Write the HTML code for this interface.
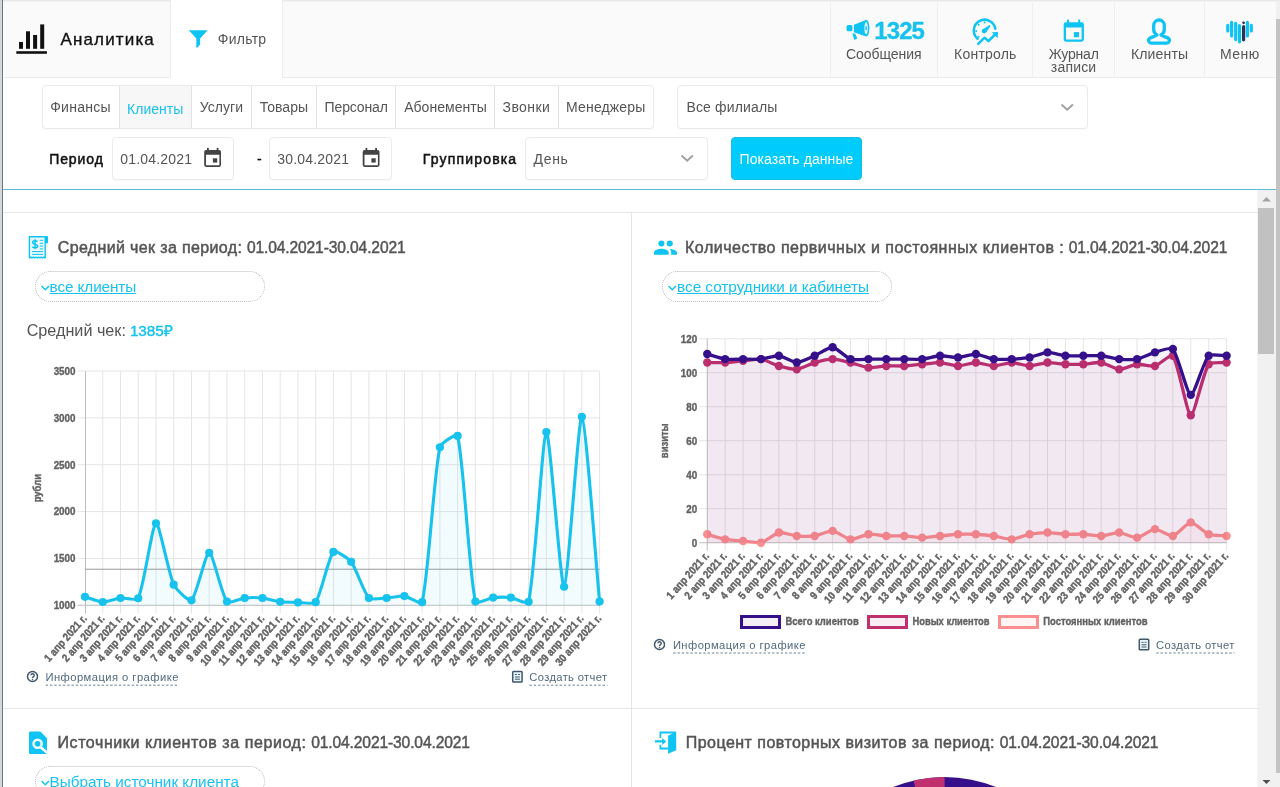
<!DOCTYPE html>
<html lang="ru">
<head>
<meta charset="utf-8">
<title>Аналитика</title>
<style>
*{box-sizing:border-box;margin:0;padding:0}
html,body{width:1280px;height:787px;overflow:hidden;background:#fff}
body{position:relative;font-family:"Liberation Sans",sans-serif;color:#555;font-size:15px}
#app{position:absolute;left:0;top:0;width:1280px;height:787px;overflow:hidden;background:#fff;will-change:transform}
.abs,.abs>*{position:absolute}
.t{position:absolute;white-space:nowrap;line-height:20px;height:20px}
/* window chrome */
#edge-l{left:0;top:0;width:3px;height:787px;background:linear-gradient(90deg,#d3d8db 0,#d3d8db 1.6px,#70757a 1.6px,#70757a 3px)}
#edge-r{left:1276px;top:19px;width:4px;height:754px;background:#c3c3c3}
#edge-r2{left:1276px;top:0;width:4px;height:787px;background:#f1f1f1}
#edge-t{left:3px;top:0;width:1277px;height:2px;background:linear-gradient(#e4e4e4,#f6f6f6)}
/* header */
#hdr{left:4px;top:0;width:1272px;height:78px;background:#fafafa;border-bottom:1px solid #ececec}
#tab-f{left:170px;top:0;width:113px;height:78px;background:#fff;border-left:1px solid #ececec;border-right:1px solid #ececec}
.hsep{top:0;width:1px;height:77px;background:#efefef}
/* filter */
.box{border:1px solid #ebebeb;border-radius:4px;background:#fff;box-shadow:0 1px 1px rgba(0,0,0,.03)}
#btn{left:731px;top:137px;width:131px;height:43px;border-radius:4px;background:#00cbfd;border:1px solid #16bde8;color:#fff;font-size:15px;line-height:43px;text-align:center;white-space:nowrap}
.vs{top:86px;width:1px;height:42px;background:#e3e3e3}
#cy{left:3px;top:189px;width:1273px;height:1px;background:#5fbdd3}
/* content */
.hr{height:1px;background:#e6e6e6;left:3px;width:1255px}
#vr{left:631px;top:213px;width:1px;height:574px;background:#e6e6e6}
h2{font-weight:normal;color:#555;font-size:16px}
.pill{height:31px;width:230px;border:1px dotted #bcbcbc;border-radius:16px;background:#fff}
.lnk{color:#18c2ef;text-decoration:underline;font-size:15px}
.il{font-size:12px;color:#50697b}
.il u{text-decoration:none}
#sb{left:1257px;top:190px;width:19px;height:597px;background:linear-gradient(90deg,#f8f8f8 0,#f1f1f1 1px)}
#sbt{left:1258px;top:208px;width:16px;height:146px;background:#c1c1c1}
svg{position:absolute;left:0;top:0;overflow:visible}
.tk text,text.tk{font-family:"Liberation Sans",sans-serif;font-weight:bold;font-size:11px;fill:#636363;stroke:#636363;stroke-width:.4px}
</style>
</head>
<body>
<div id="app">
<div class="abs" id="chrome">
  <div id="edge-r2"></div>
  <div id="edge-r"></div>
  <div id="hdr"></div>
  <div id="edge-t"></div>
  <div id="edge-l"></div>
</div>


<div class="abs" id="header">
  <div id="tab-f"></div>
  <div class="hsep" style="left:830px"></div>
  <div class="hsep" style="left:937px"></div>
  <div class="hsep" style="left:1032px"></div>
  <div class="hsep" style="left:1114px"></div>
  <div class="hsep" style="left:1204px"></div>
  <svg width="1280" height="78" viewBox="0 0 1280 78">
    <!-- analytics -->
    <g fill="#111">
      <rect x="16.3" y="51.2" width="30.6" height="2.6"/>
      <rect x="19" y="42" width="4" height="6.8"/>
      <rect x="26" y="31.3" width="4" height="17.5"/>
      <rect x="33.1" y="35" width="4" height="13.8"/>
      <rect x="40.2" y="24.4" width="4" height="24.4"/>
    </g>
    <!-- funnel -->

    <path d="M188.8 30.2 H207.6 L200.1 38.6 V44.6 L197.8 47.6 H196.3 V38.6 Z" fill="#0fc4f3"/>
    <g id="ic-mega" fill="#0fc4f3">
      <rect x="846.6" y="25" width="5.8" height="6.3" rx="1.6"/>
      <path d="M853.9 24.7 L864.6 20.5 V35.9 L853.9 32.3 Z"/>
      <ellipse cx="866.1" cy="28.2" rx="3.3" ry="8.4"/>
      <ellipse cx="866.1" cy="28.2" rx="1.7" ry="6.1" fill="#eafaff"/>
      <ellipse cx="866.1" cy="28.2" rx=".8" ry="2.3"/>
      <path d="M852.4 33.2 L855.3 33.8 L857.3 38.5 L854.2 39.9 Z"/>
    </g>
    <g id="ic-gauge">
      <g stroke="#0fc4f3" fill="none" stroke-width="2.5" stroke-linecap="round" stroke-linejoin="round">
        <path d="M977.56 38.69 A10.8 10.8 0 1 1 995.27 28.81"/>
        <path d="M978.2 43.8 L984.6 37.7 L988.4 41.2 L994.6 35"/>
      </g>
      <g fill="#0fc4f3">
        <path d="M991.8 32.3 L998 32 L997.7 38.2 Z"/>
        <circle cx="984.1" cy="31.1" r="2.4"/>
        <path d="M982.6 29.4 L989.7 25 L990.6 25.9 L985.9 32.8 Z"/>
        <circle cx="984.6" cy="22.4" r="1"/><circle cx="978.7" cy="24.8" r="1"/><circle cx="976.2" cy="31" r="1"/><circle cx="978.6" cy="36.8" r="1"/>
      </g>
    </g>
    <g id="ic-cal" fill="#0fc4f3">
      <path fill-rule="evenodd" d="M1065.8 22.2 h16 a2.1 2.1 0 0 1 2.1 2.1 v15.3 a2.1 2.1 0 0 1 -2.1 2.1 h-16 a2.1 2.1 0 0 1 -2.1 -2.1 v-15.3 a2.1 2.1 0 0 1 2.1 -2.1 z M1066 27.5 v12.1 h15.6 v-12.1 z"/>
      <rect x="1067" y="19.6" width="2" height="3.4" rx=".6"/><rect x="1078.2" y="19.6" width="2" height="3.4" rx=".6"/>
      <rect x="1073.9" y="32.1" width="5.1" height="5.1"/>
    </g>
    <path id="ic-user" fill="none" stroke="#0fc4f3" stroke-width="3.3" stroke-linejoin="round" d="M1157 35 C1154.6 33.6 1153.7 31.6 1153.7 29.5 V25.3 a5.3 5.3 0 0 1 10.6 0 V29.5 C1164.3 31.6 1163.4 33.6 1161 35 C1163 36.6 1166.5 37 1168.4 38.3 C1169.6 39.2 1169.4 41 1168.8 42 C1168.3 42.9 1167.3 43.1 1166.5 43.1 H1151.5 C1150.7 43.1 1149.7 42.9 1149.2 42 C1148.6 41 1148.4 39.2 1149.6 38.3 C1151.5 37 1155 36.6 1157 35 Z"/>
    <g id="ic-heart" stroke="#0fc4f3" stroke-width="3.2" stroke-linecap="round" fill="none">
      <path d="M1227.8 25.3 V30.9 M1231.6 22.3 V36 M1235.7 23.3 V39.6 M1239.5 25.6 V41.8 M1247.4 22.3 V36 M1251.3 25.3 V30.9"/>
      <path d="M1243.6 26.6 V39.8" stroke="#2a3356"/>
      <circle cx="1243.6" cy="22.8" r="1.4" fill="#2a3356" stroke="none"/>
    </g>

  </svg>
  <span class="t" style="left:60.45px;top:30.40px;font-size:17px;letter-spacing:1.154px;-webkit-text-stroke:.35px;color:#111;">Аналитика</span>
  <span class="t" style="left:217.76px;top:28.80px;font-size:14px;letter-spacing:0.264px;">Фильтр</span>
  <span class="t" style="left:874.22px;top:21.00px;font-size:24px;letter-spacing:-0.880px;font-weight:bold;-webkit-text-stroke:.3px;color:#18c2ef;">1325</span>
  <span class="t" style="left:846.01px;top:43.80px;font-size:14px;letter-spacing:-0.059px;">Сообщения</span>
  <span class="t" style="left:954.10px;top:43.80px;font-size:14px;letter-spacing:0.209px;">Контроль</span>
  <span class="t" style="left:1048.80px;top:43.90px;font-size:14px;letter-spacing:-0.202px;">Журнал</span>
  <span class="t" style="left:1050.82px;top:57.10px;font-size:14px;letter-spacing:0.188px;">записи</span>
  <span class="t" style="left:1130.90px;top:43.90px;font-size:14px;letter-spacing:0.171px;">Клиенты</span>
  <span class="t" style="left:1220.10px;top:43.90px;font-size:14px;letter-spacing:0.439px;">Меню</span>
</div>



<div class="abs" id="filter">
  <div class="box" style="left:42px;top:85px;width:612px;height:44px"></div>
  <div style="left:119px;top:86px;width:73px;height:42px;background:#f7f7f7;border-left:1px solid #e3e3e3;border-right:1px solid #e3e3e3"></div>
  <div class="vs" style="left:251px"></div><div class="vs" style="left:316px"></div><div class="vs" style="left:395px"></div><div class="vs" style="left:494px"></div><div class="vs" style="left:558px"></div>
  <span class="t" style="left:50.16px;top:97.00px;font-size:14px;letter-spacing:0.285px;">Финансы</span>
  <span class="t" style="left:127.10px;top:98.60px;font-size:14px;letter-spacing:-0.006px;color:#18c2ef;">Клиенты</span>
  <span class="t" style="left:199.77px;top:97.00px;font-size:14px;letter-spacing:0.027px;">Услуги</span>
  <span class="t" style="left:259.77px;top:97.00px;font-size:14px;letter-spacing:0.019px;">Товары</span>
  <span class="t" style="left:324.60px;top:97.00px;font-size:14px;letter-spacing:-0.140px;">Персонал</span>
  <span class="t" style="left:404.16px;top:97.00px;font-size:14px;letter-spacing:0.036px;">Абонементы</span>
  <span class="t" style="left:502.53px;top:97.00px;font-size:14px;letter-spacing:0.420px;">Звонки</span>
  <span class="t" style="left:566.10px;top:97.00px;font-size:14px;letter-spacing:0.153px;">Менеджеры</span>
  <div class="box" style="left:677px;top:85px;width:411px;height:44px"></div>
  <span class="t" style="left:686.40px;top:97.00px;font-size:14px;letter-spacing:0.151px;">Все филиалы</span>
  <span class="t" style="left:49.22px;top:148.80px;font-size:14px;letter-spacing:0.901px;-webkit-text-stroke:.5px;color:#111;">Период</span>
  <div class="box" style="left:112px;top:137px;width:122px;height:43px"></div>
  <span class="t" style="left:120.34px;top:148.80px;font-size:14px;letter-spacing:0.175px;">01.04.2021</span>
  <span class="t" style="left:256.95px;top:148.60px;font-size:14px;letter-spacing:0.000px;-webkit-text-stroke:.3px;color:#111;">-</span>
  <div class="box" style="left:269px;top:137px;width:123px;height:43px"></div>
  <span class="t" style="left:277.25px;top:148.80px;font-size:14px;letter-spacing:0.177px;">30.04.2021</span>
  <span class="t" style="left:422.70px;top:148.80px;font-size:14px;letter-spacing:1.183px;-webkit-text-stroke:.5px;color:#111;">Группировка</span>
  <div class="box" style="left:525px;top:137px;width:183px;height:43px"></div>
  <span class="t" style="left:533.60px;top:148.80px;font-size:14px;letter-spacing:0.632px;">День</span>
  <div id="btn"></div>
  <span class="t" style="left:739.60px;top:148.80px;font-size:14px;letter-spacing:0.075px;color:#fff;">Показать данные</span>
  <svg width="1280" height="190" viewBox="0 0 1280 190">
    <g fill="none" stroke="#a0a0a0" stroke-width="1.9">
      <path d="M1061.5 104.5 l5.7 5.2 l5.7 -5.2"/>
      <path d="M681.5 155.5 l5.7 5.2 l5.7 -5.2"/>
    </g>
    <g id="cal1" fill="#444">
      <path fill-rule="evenodd" d="M206 149.9 h13.2 a1.8 1.8 0 0 1 1.8 1.8 v13.4 a1.8 1.8 0 0 1 -1.8 1.8 h-13.2 a1.8 1.8 0 0 1 -1.8 -1.8 v-13.4 a1.8 1.8 0 0 1 1.8 -1.8 z M206 154.7 v10.5 h13.4 v-10.5 z"/>
      <rect x="207" y="147.9" width="1.8" height="2.6"/><rect x="216.7" y="147.9" width="1.8" height="2.6"/>
      <rect x="212.9" y="158.3" width="4.3" height="4.3"/>
    </g>
    <use href="#cal1" x="158.5"/>
  </svg>
  <div id="cy"></div>
</div>



<div class="abs" id="content">
  <div id="sb"></div><div id="sbt"></div>
  <div class="hr" style="top:212px"></div>
  <div class="hr" style="top:708px"></div>
  <div id="vr"></div>

  <!-- panel 1 -->
  <h2 class="abs"><span class="t" style="left:57.72px;top:238.10px;font-size:16px;letter-spacing:0.359px;-webkit-text-stroke:.5px;">Средний чек за период:</span> <span class="t" style="left:246.89px;top:238.10px;font-size:15.6px;letter-spacing:-0.125px;-webkit-text-stroke:.45px;">01.04.2021-30.04.2021</span></h2>
  <div class="pill" style="left:35px;top:271px"></div>
  <a class="t lnk" style="left:49.60px;top:277.00px;font-size:15.3px;letter-spacing:-0.098px;">все клиенты</a>
  <span class="t" style="left:26.64px;top:320.40px;font-size:16.2px;letter-spacing:0.000px;">Средний чек:</span>
  <span class="t" style="left:129.93px;top:321.40px;font-size:15.3px;letter-spacing:-0.085px;-webkit-text-stroke:.4px;color:#18c2ef;">1385₽</span>
  <span class="t il" style="left:45.39px;top:667.30px;font-size:11.2px;letter-spacing:0.466px;"><u>Информация о графике</u></span>
  <span class="t il" style="left:529.35px;top:667.30px;font-size:11.2px;letter-spacing:0.348px;"><u>Создать отчет</u></span>

  <!-- panel 2 -->
  <h2 class="abs"><span class="t" style="left:685.03px;top:238.10px;font-size:16px;letter-spacing:0.500px;-webkit-text-stroke:.5px;">Количество первичных и постоянных клиентов :</span> <span class="t" style="left:1068.79px;top:238.10px;font-size:15.6px;letter-spacing:-0.136px;-webkit-text-stroke:.45px;">01.04.2021-30.04.2021</span></h2>
  <div class="pill" style="left:662px;top:271px"></div>
  <a class="t lnk" style="left:677.10px;top:277.00px;font-size:15.3px;letter-spacing:-0.020px;">все сотрудники и кабинеты</a>
  <span class="t il" style="left:672.89px;top:634.80px;font-size:11.2px;letter-spacing:0.445px;"><u>Информация о графике</u></span>
  <span class="t il" style="left:1156.05px;top:634.80px;font-size:11.2px;letter-spacing:0.405px;"><u>Создать отчет</u></span>

  <!-- panel 3 -->
  <h2 class="abs"><span class="t" style="left:57.48px;top:733.10px;font-size:16px;letter-spacing:0.579px;-webkit-text-stroke:.5px;">Источники клиентов за период:</span> <span class="t" style="left:311.19px;top:733.10px;font-size:15.6px;letter-spacing:-0.125px;-webkit-text-stroke:.45px;">01.04.2021-30.04.2021</span></h2>
  <div class="pill" style="left:35px;top:766px"></div>
  <a class="t lnk" style="left:49.54px;top:772.00px;font-size:15.3px;letter-spacing:-0.010px;">Выбрать источник клиента</a>

  <!-- panel 4 -->
  <h2 class="abs"><span class="t" style="left:685.75px;top:733.10px;font-size:16px;letter-spacing:0.467px;-webkit-text-stroke:.5px;">Процент повторных визитов за период:</span> <span class="t" style="left:999.69px;top:733.10px;font-size:15.6px;letter-spacing:-0.125px;-webkit-text-stroke:.45px;">01.04.2021-30.04.2021</span></h2>

  <svg width="1280" height="787" viewBox="0 0 1280 787">
    <g id="chart1">
<path d="M102.74,371.00 V613.30 M120.49,371.00 V613.30 M138.23,371.00 V613.30 M155.98,371.00 V613.30 M173.72,371.00 V613.30 M191.47,371.00 V613.30 M209.21,371.00 V613.30 M226.96,371.00 V613.30 M244.70,371.00 V613.30 M262.45,371.00 V613.30 M280.19,371.00 V613.30 M297.94,371.00 V613.30 M315.68,371.00 V613.30 M333.43,371.00 V613.30 M351.17,371.00 V613.30 M368.92,371.00 V613.30 M386.66,371.00 V613.30 M404.41,371.00 V613.30 M422.15,371.00 V613.30 M439.90,371.00 V613.30 M457.64,371.00 V613.30 M475.39,371.00 V613.30 M493.13,371.00 V613.30 M510.88,371.00 V613.30 M528.62,371.00 V613.30 M546.37,371.00 V613.30 M564.11,371.00 V613.30 M581.86,371.00 V613.30 M599.60,371.00 V613.30 M77.50,558.44 H599.60 M77.50,511.58 H599.60 M77.50,464.72 H599.60 M77.50,417.86 H599.60 M77.50,371.00 H599.60" stroke="#e5e5e5" stroke-width="1" fill="none"/>
<path d="M85.50,371.00 V613.30 M77.50,605.30 H599.60" stroke="#bdbdbd" stroke-width="1" fill="none"/>
<path d="M85.00,569.22 H599.60" stroke="#9a9a9a" stroke-width="1" fill="none"/>
<path d="M85.00,596.87C88.55,597.90 99.17,601.91 102.74,602.02C106.27,602.13 116.90,598.37 120.49,597.99C123.99,597.62 136.91,601.07 138.23,598.27C144.00,586.13 152.10,524.78 155.98,523.29C159.20,522.06 168.54,573.44 173.72,584.68C175.64,588.85 189.21,602.36 191.47,600.33C196.31,595.99 205.70,552.70 209.21,552.82C212.80,552.94 221.70,594.85 226.96,601.55C228.79,603.89 241.12,598.35 244.70,597.99C248.22,597.64 258.94,597.61 262.45,597.99C266.04,598.38 276.60,601.39 280.19,601.83C283.70,602.27 294.39,602.36 297.94,602.39C301.49,602.43 313.91,604.73 315.68,602.21C321.01,594.63 328.29,557.73 333.43,551.88C335.39,549.65 348.79,558.72 351.17,561.81C355.89,567.94 363.99,592.97 368.92,597.99C371.09,600.20 383.12,598.18 386.66,597.99C390.22,597.80 400.95,595.70 404.41,596.12C408.04,596.55 421.39,605.30 422.15,602.21C428.49,575.64 433.64,476.58 439.90,447.29C440.74,443.33 456.84,432.48 457.64,435.95C463.94,463.34 468.99,572.40 475.39,601.55C476.08,604.73 489.54,598.01 493.13,597.61C496.64,597.23 507.38,597.20 510.88,597.61C514.47,598.04 527.94,605.03 528.62,601.83C535.03,571.91 542.65,433.59 546.37,432.01C549.75,430.57 560.73,588.20 564.11,586.74C567.82,585.14 578.45,415.32 581.86,416.74C585.55,418.28 596.05,564.59 599.60,601.55 L599.60,605.30 L85.00,605.30 Z" fill="rgba(28,196,236,0.06)" stroke="none"/>
<path d="M85.00,596.87C88.55,597.90 99.17,601.91 102.74,602.02C106.27,602.13 116.90,598.37 120.49,597.99C123.99,597.62 136.91,601.07 138.23,598.27C144.00,586.13 152.10,524.78 155.98,523.29C159.20,522.06 168.54,573.44 173.72,584.68C175.64,588.85 189.21,602.36 191.47,600.33C196.31,595.99 205.70,552.70 209.21,552.82C212.80,552.94 221.70,594.85 226.96,601.55C228.79,603.89 241.12,598.35 244.70,597.99C248.22,597.64 258.94,597.61 262.45,597.99C266.04,598.38 276.60,601.39 280.19,601.83C283.70,602.27 294.39,602.36 297.94,602.39C301.49,602.43 313.91,604.73 315.68,602.21C321.01,594.63 328.29,557.73 333.43,551.88C335.39,549.65 348.79,558.72 351.17,561.81C355.89,567.94 363.99,592.97 368.92,597.99C371.09,600.20 383.12,598.18 386.66,597.99C390.22,597.80 400.95,595.70 404.41,596.12C408.04,596.55 421.39,605.30 422.15,602.21C428.49,575.64 433.64,476.58 439.90,447.29C440.74,443.33 456.84,432.48 457.64,435.95C463.94,463.34 468.99,572.40 475.39,601.55C476.08,604.73 489.54,598.01 493.13,597.61C496.64,597.23 507.38,597.20 510.88,597.61C514.47,598.04 527.94,605.03 528.62,601.83C535.03,571.91 542.65,433.59 546.37,432.01C549.75,430.57 560.73,588.20 564.11,586.74C567.82,585.14 578.45,415.32 581.86,416.74C585.55,418.28 596.05,564.59 599.60,601.55" fill="none" stroke="#17c2ec" stroke-width="3.1" stroke-linejoin="round" stroke-linecap="butt"/>
<g fill="#17c2ec"><circle cx="85.00" cy="596.87" r="4.1"/><circle cx="102.74" cy="602.02" r="4.1"/><circle cx="120.49" cy="597.99" r="4.1"/><circle cx="138.23" cy="598.27" r="4.1"/><circle cx="155.98" cy="523.29" r="4.1"/><circle cx="173.72" cy="584.68" r="4.1"/><circle cx="191.47" cy="600.33" r="4.1"/><circle cx="209.21" cy="552.82" r="4.1"/><circle cx="226.96" cy="601.55" r="4.1"/><circle cx="244.70" cy="597.99" r="4.1"/><circle cx="262.45" cy="597.99" r="4.1"/><circle cx="280.19" cy="601.83" r="4.1"/><circle cx="297.94" cy="602.39" r="4.1"/><circle cx="315.68" cy="602.21" r="4.1"/><circle cx="333.43" cy="551.88" r="4.1"/><circle cx="351.17" cy="561.81" r="4.1"/><circle cx="368.92" cy="597.99" r="4.1"/><circle cx="386.66" cy="597.99" r="4.1"/><circle cx="404.41" cy="596.12" r="4.1"/><circle cx="422.15" cy="602.21" r="4.1"/><circle cx="439.90" cy="447.29" r="4.1"/><circle cx="457.64" cy="435.95" r="4.1"/><circle cx="475.39" cy="601.55" r="4.1"/><circle cx="493.13" cy="597.61" r="4.1"/><circle cx="510.88" cy="597.61" r="4.1"/><circle cx="528.62" cy="601.83" r="4.1"/><circle cx="546.37" cy="432.01" r="4.1"/><circle cx="564.11" cy="586.74" r="4.1"/><circle cx="581.86" cy="416.74" r="4.1"/><circle cx="599.60" cy="601.55" r="4.1"/></g>
<g class="tk" text-anchor="end">
<text transform="translate(75.50,609.20) scale(0.895,1)">1000</text>
<text transform="translate(75.50,562.34) scale(0.895,1)">1500</text>
<text transform="translate(75.50,515.48) scale(0.895,1)">2000</text>
<text transform="translate(75.50,468.62) scale(0.895,1)">2500</text>
<text transform="translate(75.50,421.76) scale(0.895,1)">3000</text>
<text transform="translate(75.50,374.90) scale(0.895,1)">3500</text>
</g>
<text class="tk" text-anchor="middle" transform="translate(41.30,488.15) rotate(-90) scale(0.86,1)">рубли</text>
<g class="tk" text-anchor="end">
<text transform="translate(87.50,618.80) rotate(-48.7) scale(0.885,1)">1 апр 2021 г.</text>
<text transform="translate(105.24,618.80) rotate(-48.7) scale(0.885,1)">2 апр 2021 г.</text>
<text transform="translate(122.99,618.80) rotate(-48.7) scale(0.885,1)">3 апр 2021 г.</text>
<text transform="translate(140.73,618.80) rotate(-48.7) scale(0.885,1)">4 апр 2021 г.</text>
<text transform="translate(158.48,618.80) rotate(-48.7) scale(0.885,1)">5 апр 2021 г.</text>
<text transform="translate(176.22,618.80) rotate(-48.7) scale(0.885,1)">6 апр 2021 г.</text>
<text transform="translate(193.97,618.80) rotate(-48.7) scale(0.885,1)">7 апр 2021 г.</text>
<text transform="translate(211.71,618.80) rotate(-48.7) scale(0.885,1)">8 апр 2021 г.</text>
<text transform="translate(229.46,618.80) rotate(-48.7) scale(0.885,1)">9 апр 2021 г.</text>
<text transform="translate(247.20,618.80) rotate(-48.7) scale(0.885,1)">10 апр 2021 г.</text>
<text transform="translate(264.95,618.80) rotate(-48.7) scale(0.885,1)">11 апр 2021 г.</text>
<text transform="translate(282.69,618.80) rotate(-48.7) scale(0.885,1)">12 апр 2021 г.</text>
<text transform="translate(300.44,618.80) rotate(-48.7) scale(0.885,1)">13 апр 2021 г.</text>
<text transform="translate(318.18,618.80) rotate(-48.7) scale(0.885,1)">14 апр 2021 г.</text>
<text transform="translate(335.93,618.80) rotate(-48.7) scale(0.885,1)">15 апр 2021 г.</text>
<text transform="translate(353.67,618.80) rotate(-48.7) scale(0.885,1)">16 апр 2021 г.</text>
<text transform="translate(371.42,618.80) rotate(-48.7) scale(0.885,1)">17 апр 2021 г.</text>
<text transform="translate(389.16,618.80) rotate(-48.7) scale(0.885,1)">18 апр 2021 г.</text>
<text transform="translate(406.91,618.80) rotate(-48.7) scale(0.885,1)">19 апр 2021 г.</text>
<text transform="translate(424.65,618.80) rotate(-48.7) scale(0.885,1)">20 апр 2021 г.</text>
<text transform="translate(442.40,618.80) rotate(-48.7) scale(0.885,1)">21 апр 2021 г.</text>
<text transform="translate(460.14,618.80) rotate(-48.7) scale(0.885,1)">22 апр 2021 г.</text>
<text transform="translate(477.89,618.80) rotate(-48.7) scale(0.885,1)">23 апр 2021 г.</text>
<text transform="translate(495.63,618.80) rotate(-48.7) scale(0.885,1)">24 апр 2021 г.</text>
<text transform="translate(513.38,618.80) rotate(-48.7) scale(0.885,1)">25 апр 2021 г.</text>
<text transform="translate(531.12,618.80) rotate(-48.7) scale(0.885,1)">26 апр 2021 г.</text>
<text transform="translate(548.87,618.80) rotate(-48.7) scale(0.885,1)">27 апр 2021 г.</text>
<text transform="translate(566.61,618.80) rotate(-48.7) scale(0.885,1)">28 апр 2021 г.</text>
<text transform="translate(584.36,618.80) rotate(-48.7) scale(0.885,1)">29 апр 2021 г.</text>
<text transform="translate(602.10,618.80) rotate(-48.7) scale(0.885,1)">30 апр 2021 г.</text>
</g>
    </g>
    <g id="chart2">
<path d="M725.16,338.75 V550.75 M743.07,338.75 V550.75 M760.98,338.75 V550.75 M778.88,338.75 V550.75 M796.79,338.75 V550.75 M814.70,338.75 V550.75 M832.61,338.75 V550.75 M850.52,338.75 V550.75 M868.43,338.75 V550.75 M886.34,338.75 V550.75 M904.24,338.75 V550.75 M922.15,338.75 V550.75 M940.06,338.75 V550.75 M957.97,338.75 V550.75 M975.88,338.75 V550.75 M993.79,338.75 V550.75 M1011.70,338.75 V550.75 M1029.61,338.75 V550.75 M1047.51,338.75 V550.75 M1065.42,338.75 V550.75 M1083.33,338.75 V550.75 M1101.24,338.75 V550.75 M1119.15,338.75 V550.75 M1137.06,338.75 V550.75 M1154.97,338.75 V550.75 M1172.87,338.75 V550.75 M1190.78,338.75 V550.75 M1208.69,338.75 V550.75 M1226.60,338.75 V550.75 M699.25,508.75 H1226.60 M699.25,474.75 H1226.60 M699.25,440.75 H1226.60 M699.25,406.75 H1226.60 M699.25,372.75 H1226.60 M699.25,338.75 H1226.60" stroke="#e5e5e5" stroke-width="1" fill="none"/>
<path d="M707.25,338.75 V550.75 M699.25,542.75 H1226.60" stroke="#bdbdbd" stroke-width="1" fill="none"/>
<path d="M707.25,534.25C710.83,535.27 721.52,538.66 725.16,539.35C728.68,540.02 739.49,540.71 743.07,541.05C746.65,541.39 757.64,542.75 760.98,542.75C764.80,541.84 775.08,533.27 778.88,532.55C782.25,531.91 793.18,535.61 796.79,535.95C800.34,536.29 811.19,536.45 814.70,535.95C818.35,535.43 829.14,530.52 832.61,530.85C836.30,531.20 846.83,539.00 850.52,539.35C853.99,539.68 864.78,534.60 868.43,534.25C871.95,533.92 882.75,535.78 886.34,535.95C889.91,536.12 900.67,535.78 904.24,535.95C907.83,536.12 918.57,537.65 922.15,537.65C925.74,537.65 936.48,536.29 940.06,535.95C943.64,535.61 954.38,534.42 957.97,534.25C961.54,534.08 972.31,534.08 975.88,534.25C979.47,534.42 990.23,535.44 993.79,535.95C997.39,536.46 1008.15,539.52 1011.70,539.35C1015.32,539.18 1025.96,534.94 1029.61,534.25C1033.13,533.58 1043.93,532.55 1047.51,532.55C1051.10,532.55 1061.83,534.08 1065.42,534.25C1069.00,534.42 1079.76,534.08 1083.33,534.25C1086.92,534.42 1097.68,536.12 1101.24,535.95C1104.85,535.78 1115.60,532.38 1119.15,532.55C1122.77,532.72 1133.59,537.98 1137.06,537.65C1140.75,537.30 1151.32,529.32 1154.97,529.15C1158.49,528.98 1169.58,536.58 1172.87,535.95C1176.74,535.22 1187.12,522.52 1190.78,522.35C1194.28,522.18 1204.79,532.77 1208.69,534.25C1211.95,535.49 1223.02,535.61 1226.60,535.95 L1226.60,542.75 L707.25,542.75 Z" fill="rgba(251,143,143,0.05)" stroke="none"/>
<path d="M707.25,534.25C710.83,535.27 721.52,538.66 725.16,539.35C728.68,540.02 739.49,540.71 743.07,541.05C746.65,541.39 757.64,542.75 760.98,542.75C764.80,541.84 775.08,533.27 778.88,532.55C782.25,531.91 793.18,535.61 796.79,535.95C800.34,536.29 811.19,536.45 814.70,535.95C818.35,535.43 829.14,530.52 832.61,530.85C836.30,531.20 846.83,539.00 850.52,539.35C853.99,539.68 864.78,534.60 868.43,534.25C871.95,533.92 882.75,535.78 886.34,535.95C889.91,536.12 900.67,535.78 904.24,535.95C907.83,536.12 918.57,537.65 922.15,537.65C925.74,537.65 936.48,536.29 940.06,535.95C943.64,535.61 954.38,534.42 957.97,534.25C961.54,534.08 972.31,534.08 975.88,534.25C979.47,534.42 990.23,535.44 993.79,535.95C997.39,536.46 1008.15,539.52 1011.70,539.35C1015.32,539.18 1025.96,534.94 1029.61,534.25C1033.13,533.58 1043.93,532.55 1047.51,532.55C1051.10,532.55 1061.83,534.08 1065.42,534.25C1069.00,534.42 1079.76,534.08 1083.33,534.25C1086.92,534.42 1097.68,536.12 1101.24,535.95C1104.85,535.78 1115.60,532.38 1119.15,532.55C1122.77,532.72 1133.59,537.98 1137.06,537.65C1140.75,537.30 1151.32,529.32 1154.97,529.15C1158.49,528.98 1169.58,536.58 1172.87,535.95C1176.74,535.22 1187.12,522.52 1190.78,522.35C1194.28,522.18 1204.79,532.77 1208.69,534.25C1211.95,535.49 1223.02,535.61 1226.60,535.95" fill="none" stroke="#fb8f8f" stroke-width="3.3" stroke-linejoin="round" stroke-linecap="butt"/>
<g fill="#fb8f8f"><circle cx="707.25" cy="534.25" r="4.2"/><circle cx="725.16" cy="539.35" r="4.2"/><circle cx="743.07" cy="541.05" r="4.2"/><circle cx="760.98" cy="542.75" r="4.2"/><circle cx="778.88" cy="532.55" r="4.2"/><circle cx="796.79" cy="535.95" r="4.2"/><circle cx="814.70" cy="535.95" r="4.2"/><circle cx="832.61" cy="530.85" r="4.2"/><circle cx="850.52" cy="539.35" r="4.2"/><circle cx="868.43" cy="534.25" r="4.2"/><circle cx="886.34" cy="535.95" r="4.2"/><circle cx="904.24" cy="535.95" r="4.2"/><circle cx="922.15" cy="537.65" r="4.2"/><circle cx="940.06" cy="535.95" r="4.2"/><circle cx="957.97" cy="534.25" r="4.2"/><circle cx="975.88" cy="534.25" r="4.2"/><circle cx="993.79" cy="535.95" r="4.2"/><circle cx="1011.70" cy="539.35" r="4.2"/><circle cx="1029.61" cy="534.25" r="4.2"/><circle cx="1047.51" cy="532.55" r="4.2"/><circle cx="1065.42" cy="534.25" r="4.2"/><circle cx="1083.33" cy="534.25" r="4.2"/><circle cx="1101.24" cy="535.95" r="4.2"/><circle cx="1119.15" cy="532.55" r="4.2"/><circle cx="1137.06" cy="537.65" r="4.2"/><circle cx="1154.97" cy="529.15" r="4.2"/><circle cx="1172.87" cy="535.95" r="4.2"/><circle cx="1190.78" cy="522.35" r="4.2"/><circle cx="1208.69" cy="534.25" r="4.2"/><circle cx="1226.60" cy="535.95" r="4.2"/></g>
<path d="M707.25,362.55C710.83,362.55 721.58,362.72 725.16,362.55C728.75,362.38 739.49,361.19 743.07,360.85C746.65,360.51 757.51,358.66 760.98,359.15C764.67,359.68 775.21,364.90 778.88,365.95C782.38,366.94 793.30,369.68 796.79,369.35C800.46,369.00 811.03,363.60 814.70,362.55C818.19,361.56 829.03,359.15 832.61,359.15C836.19,359.15 846.98,361.71 850.52,362.55C854.14,363.41 864.78,367.30 868.43,367.65C871.95,367.98 882.75,366.12 886.34,365.95C889.91,365.78 900.67,366.12 904.24,365.95C907.83,365.78 918.57,364.59 922.15,364.25C925.74,363.91 936.50,362.38 940.06,362.55C943.67,362.72 954.39,365.95 957.97,365.95C961.55,365.95 972.30,362.55 975.88,362.55C979.46,362.55 990.21,365.95 993.79,365.95C997.37,365.95 1008.11,362.55 1011.70,362.55C1015.28,362.55 1026.02,365.95 1029.61,365.95C1033.19,365.95 1043.91,362.72 1047.51,362.55C1051.07,362.38 1061.83,364.08 1065.42,364.25C1069.00,364.42 1079.76,364.42 1083.33,364.25C1086.92,364.08 1097.77,362.06 1101.24,362.55C1104.93,363.08 1115.52,369.18 1119.15,369.35C1122.68,369.52 1133.41,364.60 1137.06,364.25C1140.58,363.92 1151.63,366.74 1154.97,365.95C1158.79,365.04 1171.09,353.29 1172.87,355.75C1178.25,363.15 1186.95,414.34 1190.78,415.25C1194.12,416.04 1203.32,372.16 1208.69,364.25C1210.48,361.62 1223.02,362.89 1226.60,362.55 L1226.60,542.75 L707.25,542.75 Z" fill="rgba(192,48,110,0.05)" stroke="none"/>
<path d="M707.25,362.55C710.83,362.55 721.58,362.72 725.16,362.55C728.75,362.38 739.49,361.19 743.07,360.85C746.65,360.51 757.51,358.66 760.98,359.15C764.67,359.68 775.21,364.90 778.88,365.95C782.38,366.94 793.30,369.68 796.79,369.35C800.46,369.00 811.03,363.60 814.70,362.55C818.19,361.56 829.03,359.15 832.61,359.15C836.19,359.15 846.98,361.71 850.52,362.55C854.14,363.41 864.78,367.30 868.43,367.65C871.95,367.98 882.75,366.12 886.34,365.95C889.91,365.78 900.67,366.12 904.24,365.95C907.83,365.78 918.57,364.59 922.15,364.25C925.74,363.91 936.50,362.38 940.06,362.55C943.67,362.72 954.39,365.95 957.97,365.95C961.55,365.95 972.30,362.55 975.88,362.55C979.46,362.55 990.21,365.95 993.79,365.95C997.37,365.95 1008.11,362.55 1011.70,362.55C1015.28,362.55 1026.02,365.95 1029.61,365.95C1033.19,365.95 1043.91,362.72 1047.51,362.55C1051.07,362.38 1061.83,364.08 1065.42,364.25C1069.00,364.42 1079.76,364.42 1083.33,364.25C1086.92,364.08 1097.77,362.06 1101.24,362.55C1104.93,363.08 1115.52,369.18 1119.15,369.35C1122.68,369.52 1133.41,364.60 1137.06,364.25C1140.58,363.92 1151.63,366.74 1154.97,365.95C1158.79,365.04 1171.09,353.29 1172.87,355.75C1178.25,363.15 1186.95,414.34 1190.78,415.25C1194.12,416.04 1203.32,372.16 1208.69,364.25C1210.48,361.62 1223.02,362.89 1226.60,362.55" fill="none" stroke="#c0306e" stroke-width="3.3" stroke-linejoin="round" stroke-linecap="butt"/>
<g fill="#c0306e"><circle cx="707.25" cy="362.55" r="4.2"/><circle cx="725.16" cy="362.55" r="4.2"/><circle cx="743.07" cy="360.85" r="4.2"/><circle cx="760.98" cy="359.15" r="4.2"/><circle cx="778.88" cy="365.95" r="4.2"/><circle cx="796.79" cy="369.35" r="4.2"/><circle cx="814.70" cy="362.55" r="4.2"/><circle cx="832.61" cy="359.15" r="4.2"/><circle cx="850.52" cy="362.55" r="4.2"/><circle cx="868.43" cy="367.65" r="4.2"/><circle cx="886.34" cy="365.95" r="4.2"/><circle cx="904.24" cy="365.95" r="4.2"/><circle cx="922.15" cy="364.25" r="4.2"/><circle cx="940.06" cy="362.55" r="4.2"/><circle cx="957.97" cy="365.95" r="4.2"/><circle cx="975.88" cy="362.55" r="4.2"/><circle cx="993.79" cy="365.95" r="4.2"/><circle cx="1011.70" cy="362.55" r="4.2"/><circle cx="1029.61" cy="365.95" r="4.2"/><circle cx="1047.51" cy="362.55" r="4.2"/><circle cx="1065.42" cy="364.25" r="4.2"/><circle cx="1083.33" cy="364.25" r="4.2"/><circle cx="1101.24" cy="362.55" r="4.2"/><circle cx="1119.15" cy="369.35" r="4.2"/><circle cx="1137.06" cy="364.25" r="4.2"/><circle cx="1154.97" cy="365.95" r="4.2"/><circle cx="1172.87" cy="355.75" r="4.2"/><circle cx="1190.78" cy="415.25" r="4.2"/><circle cx="1208.69" cy="364.25" r="4.2"/><circle cx="1226.60" cy="362.55" r="4.2"/></g>
<path d="M707.25,354.05C710.83,355.07 721.51,358.63 725.16,359.15C728.67,359.65 739.49,359.15 743.07,359.15C746.65,359.15 757.43,359.49 760.98,359.15C764.59,358.81 775.39,355.42 778.88,355.75C782.56,356.10 793.21,362.55 796.79,362.55C800.37,362.55 811.18,357.25 814.70,355.75C818.34,354.19 829.17,346.92 832.61,347.25C836.34,347.60 846.61,357.85 850.52,359.15C853.77,360.23 864.85,359.15 868.43,359.15C872.01,359.15 882.75,359.15 886.34,359.15C889.92,359.15 900.66,359.15 904.24,359.15C907.83,359.15 918.60,359.49 922.15,359.15C925.77,358.81 936.46,355.92 940.06,355.75C943.62,355.58 954.41,357.62 957.97,357.45C961.58,357.28 972.34,353.88 975.88,354.05C979.50,354.22 990.14,358.63 993.79,359.15C997.30,359.65 1008.12,359.32 1011.70,359.15C1015.29,358.98 1026.09,358.12 1029.61,357.45C1033.25,356.76 1043.89,352.52 1047.51,352.35C1051.06,352.18 1061.81,355.41 1065.42,355.75C1068.97,356.09 1079.75,355.75 1083.33,355.75C1086.91,355.75 1097.69,355.41 1101.24,355.75C1104.85,356.09 1115.53,358.81 1119.15,359.15C1122.70,359.49 1133.60,359.81 1137.06,359.15C1140.76,358.45 1151.29,353.40 1154.97,352.35C1158.46,351.36 1170.94,346.65 1172.87,348.95C1178.10,355.15 1186.96,394.12 1190.78,394.85C1194.12,395.48 1203.63,361.27 1208.69,355.75C1210.80,353.45 1223.02,355.75 1226.60,355.75 L1226.60,542.75 L707.25,542.75 Z" fill="rgba(53,16,138,0.05)" stroke="none"/>
<path d="M707.25,354.05C710.83,355.07 721.51,358.63 725.16,359.15C728.67,359.65 739.49,359.15 743.07,359.15C746.65,359.15 757.43,359.49 760.98,359.15C764.59,358.81 775.39,355.42 778.88,355.75C782.56,356.10 793.21,362.55 796.79,362.55C800.37,362.55 811.18,357.25 814.70,355.75C818.34,354.19 829.17,346.92 832.61,347.25C836.34,347.60 846.61,357.85 850.52,359.15C853.77,360.23 864.85,359.15 868.43,359.15C872.01,359.15 882.75,359.15 886.34,359.15C889.92,359.15 900.66,359.15 904.24,359.15C907.83,359.15 918.60,359.49 922.15,359.15C925.77,358.81 936.46,355.92 940.06,355.75C943.62,355.58 954.41,357.62 957.97,357.45C961.58,357.28 972.34,353.88 975.88,354.05C979.50,354.22 990.14,358.63 993.79,359.15C997.30,359.65 1008.12,359.32 1011.70,359.15C1015.29,358.98 1026.09,358.12 1029.61,357.45C1033.25,356.76 1043.89,352.52 1047.51,352.35C1051.06,352.18 1061.81,355.41 1065.42,355.75C1068.97,356.09 1079.75,355.75 1083.33,355.75C1086.91,355.75 1097.69,355.41 1101.24,355.75C1104.85,356.09 1115.53,358.81 1119.15,359.15C1122.70,359.49 1133.60,359.81 1137.06,359.15C1140.76,358.45 1151.29,353.40 1154.97,352.35C1158.46,351.36 1170.94,346.65 1172.87,348.95C1178.10,355.15 1186.96,394.12 1190.78,394.85C1194.12,395.48 1203.63,361.27 1208.69,355.75C1210.80,353.45 1223.02,355.75 1226.60,355.75" fill="none" stroke="#35108a" stroke-width="3.3" stroke-linejoin="round" stroke-linecap="butt"/>
<g fill="#35108a"><circle cx="707.25" cy="354.05" r="4.2"/><circle cx="725.16" cy="359.15" r="4.2"/><circle cx="743.07" cy="359.15" r="4.2"/><circle cx="760.98" cy="359.15" r="4.2"/><circle cx="778.88" cy="355.75" r="4.2"/><circle cx="796.79" cy="362.55" r="4.2"/><circle cx="814.70" cy="355.75" r="4.2"/><circle cx="832.61" cy="347.25" r="4.2"/><circle cx="850.52" cy="359.15" r="4.2"/><circle cx="868.43" cy="359.15" r="4.2"/><circle cx="886.34" cy="359.15" r="4.2"/><circle cx="904.24" cy="359.15" r="4.2"/><circle cx="922.15" cy="359.15" r="4.2"/><circle cx="940.06" cy="355.75" r="4.2"/><circle cx="957.97" cy="357.45" r="4.2"/><circle cx="975.88" cy="354.05" r="4.2"/><circle cx="993.79" cy="359.15" r="4.2"/><circle cx="1011.70" cy="359.15" r="4.2"/><circle cx="1029.61" cy="357.45" r="4.2"/><circle cx="1047.51" cy="352.35" r="4.2"/><circle cx="1065.42" cy="355.75" r="4.2"/><circle cx="1083.33" cy="355.75" r="4.2"/><circle cx="1101.24" cy="355.75" r="4.2"/><circle cx="1119.15" cy="359.15" r="4.2"/><circle cx="1137.06" cy="359.15" r="4.2"/><circle cx="1154.97" cy="352.35" r="4.2"/><circle cx="1172.87" cy="348.95" r="4.2"/><circle cx="1190.78" cy="394.85" r="4.2"/><circle cx="1208.69" cy="355.75" r="4.2"/><circle cx="1226.60" cy="355.75" r="4.2"/></g>
<g class="tk" text-anchor="end">
<text transform="translate(697.25,546.65) scale(0.895,1)">0</text>
<text transform="translate(697.25,512.65) scale(0.895,1)">20</text>
<text transform="translate(697.25,478.65) scale(0.895,1)">40</text>
<text transform="translate(697.25,444.65) scale(0.895,1)">60</text>
<text transform="translate(697.25,410.65) scale(0.895,1)">80</text>
<text transform="translate(697.25,376.65) scale(0.895,1)">100</text>
<text transform="translate(697.25,342.65) scale(0.895,1)">120</text>
</g>
<text class="tk" text-anchor="middle" transform="translate(668.00,440.75) rotate(-90) scale(0.86,1)">визиты</text>
<g class="tk" text-anchor="end">
<text transform="translate(709.75,556.25) rotate(-48.7) scale(0.885,1)">1 апр 2021 г.</text>
<text transform="translate(727.66,556.25) rotate(-48.7) scale(0.885,1)">2 апр 2021 г.</text>
<text transform="translate(745.57,556.25) rotate(-48.7) scale(0.885,1)">3 апр 2021 г.</text>
<text transform="translate(763.48,556.25) rotate(-48.7) scale(0.885,1)">4 апр 2021 г.</text>
<text transform="translate(781.38,556.25) rotate(-48.7) scale(0.885,1)">5 апр 2021 г.</text>
<text transform="translate(799.29,556.25) rotate(-48.7) scale(0.885,1)">6 апр 2021 г.</text>
<text transform="translate(817.20,556.25) rotate(-48.7) scale(0.885,1)">7 апр 2021 г.</text>
<text transform="translate(835.11,556.25) rotate(-48.7) scale(0.885,1)">8 апр 2021 г.</text>
<text transform="translate(853.02,556.25) rotate(-48.7) scale(0.885,1)">9 апр 2021 г.</text>
<text transform="translate(870.93,556.25) rotate(-48.7) scale(0.885,1)">10 апр 2021 г.</text>
<text transform="translate(888.84,556.25) rotate(-48.7) scale(0.885,1)">11 апр 2021 г.</text>
<text transform="translate(906.74,556.25) rotate(-48.7) scale(0.885,1)">12 апр 2021 г.</text>
<text transform="translate(924.65,556.25) rotate(-48.7) scale(0.885,1)">13 апр 2021 г.</text>
<text transform="translate(942.56,556.25) rotate(-48.7) scale(0.885,1)">14 апр 2021 г.</text>
<text transform="translate(960.47,556.25) rotate(-48.7) scale(0.885,1)">15 апр 2021 г.</text>
<text transform="translate(978.38,556.25) rotate(-48.7) scale(0.885,1)">16 апр 2021 г.</text>
<text transform="translate(996.29,556.25) rotate(-48.7) scale(0.885,1)">17 апр 2021 г.</text>
<text transform="translate(1014.20,556.25) rotate(-48.7) scale(0.885,1)">18 апр 2021 г.</text>
<text transform="translate(1032.11,556.25) rotate(-48.7) scale(0.885,1)">19 апр 2021 г.</text>
<text transform="translate(1050.01,556.25) rotate(-48.7) scale(0.885,1)">20 апр 2021 г.</text>
<text transform="translate(1067.92,556.25) rotate(-48.7) scale(0.885,1)">21 апр 2021 г.</text>
<text transform="translate(1085.83,556.25) rotate(-48.7) scale(0.885,1)">22 апр 2021 г.</text>
<text transform="translate(1103.74,556.25) rotate(-48.7) scale(0.885,1)">23 апр 2021 г.</text>
<text transform="translate(1121.65,556.25) rotate(-48.7) scale(0.885,1)">24 апр 2021 г.</text>
<text transform="translate(1139.56,556.25) rotate(-48.7) scale(0.885,1)">25 апр 2021 г.</text>
<text transform="translate(1157.47,556.25) rotate(-48.7) scale(0.885,1)">26 апр 2021 г.</text>
<text transform="translate(1175.37,556.25) rotate(-48.7) scale(0.885,1)">27 апр 2021 г.</text>
<text transform="translate(1193.28,556.25) rotate(-48.7) scale(0.885,1)">28 апр 2021 г.</text>
<text transform="translate(1211.19,556.25) rotate(-48.7) scale(0.885,1)">29 апр 2021 г.</text>
<text transform="translate(1229.10,556.25) rotate(-48.7) scale(0.885,1)">30 апр 2021 г.</text>
</g>
    </g>
    <g id="legend" class="tk">
      <rect x="741.5" y="616.5" width="38" height="11" fill="#f4eef7" stroke="#35108a" stroke-width="3"/>
      <text x="785.5" y="625" textLength="73.2" lengthAdjust="spacingAndGlyphs">Всего клиентов</text>
      <rect x="868.5" y="616.5" width="38" height="11" fill="#f9eef3" stroke="#c0306e" stroke-width="3"/>
      <text x="912.5" y="625" textLength="77" lengthAdjust="spacingAndGlyphs">Новых клиентов</text>
      <rect x="999.5" y="616.5" width="38" height="11" fill="#fff5f5" stroke="#fb8f8f" stroke-width="3"/>
      <text x="1043.3" y="625" textLength="104.2" lengthAdjust="spacingAndGlyphs">Постоянных клиентов</text>
    </g>
    <g id="pie">
      <circle cx="944.6" cy="914.5" r="137.5" fill="#35108a"/>
      <path d="M944.6 914.5 L913.6 780.5 A137.5 137.5 0 0 1 944.6 777 Z" fill="#c0306e"/>
    </g>
    <g id="sbarrows">
      <path d="M1262 201.5 l4.5 -4.5 l4.5 4.5 z" fill="#a3a3a3"/>
      <path d="M1262.5 779.9 l4 4.2 l4 -4.2 z" fill="#505050"/>
    </g>


    <g id="chev" fill="none" stroke="#0fc4f3" stroke-width="1.5">
      <path id="cv" d="M41.6 286 l3.7 3.7 l3.7 -3.7"/>
      <use href="#cv" x="627"/>
      <use href="#cv" y="495"/>
    </g>
    <g id="ic-receipt">
      <path d="M29.4 236.8 H45.2 V258 l-1.3 -.9 l-1.4 .9 l-1.3 -.9 l-1.3 .9 l-1.3 -.9 l-1.4 .9 l-1.3 -.9 l-1.3 .9 l-1.3 -.9 l-1.4 .9 l-1.3 -.9 l-1.2 .9 Z" fill="#e9f9fe" stroke="#0fc4f3" stroke-width="1.4" stroke-linejoin="round"/>
      <path d="M45.2 236.1 H47 a1 1 0 0 1 1 1 V243.2 H45.2 Z" fill="#0fc4f3"/>
      <path d="M37.6 241.6 C36.6 240.4 32.6 240.3 32.6 242.5 C32.6 244.6 37.7 243.7 37.7 246 C37.7 248.2 33.4 248 32.3 246.7 M35.1 239.3 V249" fill="none" stroke="#0fc4f3" stroke-width="1.5"/>
      <path d="M39.8 240.3 H43 M39.8 243.3 H43 M39.8 246.1 H43 M39.8 248.9 H43 M32 251.6 H43 M32 254.4 H43" stroke="#0fc4f3" stroke-width="1" fill="none"/>
    </g>
    <g id="ic-people" fill="#0fc4f3">
      <circle cx="661.4" cy="243.5" r="3.05"/><circle cx="669.75" cy="243.5" r="3.05"/>
      <path d="M654 254.8 V252.6 C654 250 658.5 248.8 661.4 248.8 C664.3 248.8 668.7 250 668.7 252.6 V254.8 Z"/>
      <path d="M669.6 248.9 C670.8 249.8 671.2 251.2 671.2 252.6 V254.8 H677 V252.6 C677 250 672.4 248.9 669.6 248.9 Z"/>
    </g>
    <g id="ic-find">
      <path d="M30.2 731.6 H40.4 L47 738.2 V752.8 a1.2 1.2 0 0 1 -1.2 1.2 H30.2 a1.2 1.2 0 0 1 -1.2 -1.2 V732.8 a1.2 1.2 0 0 1 1.2 -1.2 Z" fill="#0fc4f3"/>
      <circle cx="37.6" cy="743.8" r="4.05" fill="none" stroke="#f2fcff" stroke-width="2.5"/>
      <path d="M40.9 747.6 L47.2 752.8" stroke="#fff" stroke-width="2.6" fill="none"/>
    </g>
    <g id="ic-door">
      <path d="M660.4 738 V732.5 H675.3 M660.4 744.8 V748.5 H668.2" fill="none" stroke="#0fc4f3" stroke-width="1.8"/>
      <path d="M668.1 735.7 L676.2 731.6 V750.2 L668.1 753.8 Z" fill="#0fc4f3"/>
      <path d="M654.9 740.3 H662.3 V738 L666.2 741.45 L662.3 744.9 V742.6 H654.9 Z" fill="#0fc4f3"/>
    </g>
    <g id="ic-q" fill="none" stroke="#3f566a" stroke-width="1.5">
      <circle cx="32.5" cy="676.5" r="5"/>
      <path d="M30.9 675.3 a1.65 1.65 0 1 1 2.4 1.5 c-.6 .35 -.8 .6 -.8 1.2" stroke-width="1.4"/>
      <circle cx="32.5" cy="679.6" r=".5" fill="#3f566a" stroke-width=".6"/>
    </g>
    <use href="#ic-q" x="627" y="-32"/>
    <g id="ic-rep">
      <rect x="512.7" y="671.4" width="9.4" height="10.6" rx=".8" fill="#e9f6fb" stroke="#3f566a" stroke-width="1.5"/>
      <path d="M514.9 674.5 h2 M518 674.5 h1.9 M514.9 677 h5 M514.9 679.2 h5" stroke="#3f566a" stroke-width="1" fill="none"/>
    </g>
    <use href="#ic-rep" x="626.6" y="-32.2"/>
    <path d="M45.7 685.2 H178.4 M529.5 685.2 H607.5 M673.2 653 H805.5 M1156.2 653 H1234.5" fill="none" stroke="#6d8090" stroke-width="1" stroke-dasharray="2.4 1.9"/>

  </svg>
</div>


</div>
</body>
</html>
